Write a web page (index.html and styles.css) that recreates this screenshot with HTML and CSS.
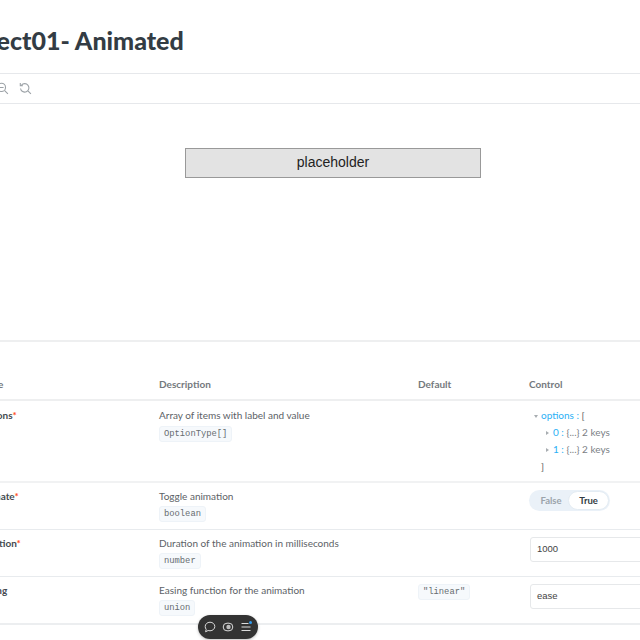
FILE: index.html
```html
<!DOCTYPE html>
<html lang="en">
<head>
    <meta charset="UTF-8">
    <title>Select01- Animated</title>
    <link rel="stylesheet" href="styles.css">
</head>
<body>
    <div class="page">
        <h1 class="title">Select01- Animated</h1>

        <div class="toolbar">
            <svg class="tool" width="13" height="13" viewBox="0 0 12 12"><circle cx="5" cy="5" r="3.800"/><path d="M3 5h4M8 8l3 3"/></svg>
            <svg class="tool" width="13" height="13" viewBox="0 0 12 12"><path d="M2.200 3A3.900 3.900 0 1 1 1.400 6M1.200 1v2.400h2.400M8 8l3 3"/></svg>
        </div>

        <div class="preview">
            <div class="placeholder">placeholder</div>
        </div>

        <div class="args">
            <div class="row head">
                <div>Name</div>
                <div>Description</div>
                <div>Default</div>
                <div>Control</div>
            </div>

            <div class="row row-options">
                <div class="name">options<span class="req">*</span></div>
                <div>
                    <div>Array of items with label and value</div>
                    <code class="type-options">OptionType[]</code>
                </div>
                <div></div>
                <div class="tree">
                    <div class="tree-line"><i class="arrow open"></i><span class="key">options :</span> <span class="bracket">[</span></div>
                    <div class="tree-line nested"><i class="arrow"></i><span class="key">0 :</span> {...} 2 keys</div>
                    <div class="tree-line nested"><i class="arrow"></i><span class="key">1 :</span> {...} 2 keys</div>
                    <div class="tree-line close"><span class="bracket">]</span></div>
                </div>
            </div>

            <div class="row">
                <div class="name">animate<span class="req">*</span></div>
                <div>
                    <div>Toggle animation</div>
                    <code>boolean</code>
                </div>
                <div></div>
                <div class="control">
                    <div class="toggle">
                        <span class="off">False</span>
                        <span class="on">True</span>
                    </div>
                </div>
            </div>

            <div class="row">
                <div class="name">duration<span class="req">*</span></div>
                <div>
                    <div>Duration of the animation in milliseconds</div>
                    <code>number</code>
                </div>
                <div></div>
                <div class="control"><div class="field">1000</div></div>
            </div>

            <div class="row row-last">
                <div class="name">easing</div>
                <div>
                    <div>Easing function for the animation</div>
                    <code>union</code>
                </div>
                <div><code class="default">"linear"</code></div>
                <div class="control"><div class="field">ease</div></div>
            </div>
        </div>
    </div>

    <div class="floating">
        <svg width="12" height="12" viewBox="0 0 12 12"><path d="M6 1.200c2.800 0 4.800 2 4.800 4.300S8.800 9.800 6 9.800c-.7 0-1.300-.1-1.900-.3L1.600 10.800l.6-2.500C1.500 7.500 1.200 6.600 1.200 5.500 1.200 3.200 3.200 1.200 6 1.200z"/></svg>
        <svg width="12" height="12" viewBox="0 0 12 12"><rect x="1.200" y="2.200" width="9.600" height="7.600" rx="3.800"/><circle class="fill" cx="6.500" cy="6" r="2.200"/></svg>
        <span class="menu">
            <svg width="12" height="12" viewBox="0 0 12 12"><path d="M1.500 2.500h7M1.500 6h9M1.500 9.500h9"/></svg>
            <i class="dot"></i>
        </span>
    </div>
</body>
</html>
```

FILE: styles.css
```css
html, body {
    margin: 0;
    height: 640px;
    overflow: hidden;
    background: #fff;
}
body {
    font-family: "Lato", "Noto Sans", sans-serif;
    font-size: 10px;
    color: #5c6266;
}
/* the screenshot is scrolled sideways, so the page starts left of the window */
.page {
    width: 780px;
    margin-left: -60px;
}
.title {
    margin: 0;
    height: 73px;
    box-sizing: border-box;
    padding: 24px 0 0 23px;
    font-size: 25px;
    line-height: 32px;
    font-weight: 900;
    color: #333c44;
}
.toolbar {
    height: 29px;
    display: flex;
    align-items: center;
    gap: 10px;
    padding-left: 56px;
    border-top: 1px solid #e6e8eb;
    border-bottom: 1px solid #e6e8eb;
}
.tool {
    fill: none;
    stroke: #9ba1a6;
    stroke-width: 1;
}
.preview {
    height: 238px;
    box-sizing: border-box;
    padding: 44px 0 0 245px;
    border-bottom: 2px solid #eeeff0;
}
.placeholder {
    width: 294px;
    height: 28px;
    border: 1px solid #999;
    background: #e3e3e3;
    color: #222;
    font-family: "Liberation Sans", Arial, sans-serif;
    font-size: 14px;
    line-height: 27px;
    text-align: center;
}
.args {
    padding-top: 26px;
}
.row {
    display: grid;
    grid-template-columns: 219px 259px 111px 1fr;
    box-sizing: border-box;
    padding-top: 7px;
    height: 47px;
    border-bottom: 1px solid #e8ebee;
}
.row > :first-child {
    padding-left: 39px;
}
.row.head > :first-child {
    padding-left: 37px;
}
.row.head {
    height: 33px;
    padding-top: 10px;
    font-weight: 700;
    color: #74797d;
    border-bottom: 2px solid #eeeff0;
}
.row-options {
    height: 82px;
    padding-top: 8px;
    border-bottom: 2px solid #f1f2f3;
}
.row-last {
    height: 48px;
    border-bottom: 2px solid #eceef0;
}
.name {
    font-weight: 700;
    color: #444a50;
}
.req {
    color: #ff4d24;
}
code {
    display: inline-block;
    margin-top: 4px;
    padding: 2px 4px;
    background: #f6f9fc;
    border: 1px solid #eef3f8;
    border-radius: 3px;
    font-family: "Liberation Mono", monospace;
    font-size: 8.800px;
    line-height: 10px;
    color: #666c70;
}
.type-options {
    margin-top: 5px;
}
.default {
    margin-top: 0;
}
.tree {
    margin-top: -1px;
    padding-left: 5px;
}
.tree-line {
    height: 17px;
    line-height: 15px;
    color: #7a8085;
    white-space: nowrap;
}
.nested {
    padding-left: 12px;
}
.close {
    padding-left: 7px;
}
.arrow {
    display: inline-block;
    width: 0;
    height: 0;
    margin: 0 4px 1px 0;
    border-left: 3px solid #a8adb1;
    border-top: 2px solid transparent;
    border-bottom: 2px solid transparent;
}
.arrow.open {
    margin-right: 3px;
    border-top: 3px solid #a8adb1;
    border-left: 2px solid transparent;
    border-right: 2px solid transparent;
    border-bottom: 0;
}
.key {
    color: #2bb0f5;
}
.bracket {
    color: #5c6266;
}
.toggle {
    display: flex;
    align-items: center;
    width: 81px;
    height: 21px;
    border-radius: 11px;
    background: #eaf1f8;
    font-weight: 700;
    font-size: 9.500px;
}
.off {
    width: 39px;
    box-sizing: border-box;
    padding-left: 5px;
    text-align: center;
    color: #9ba4ab;
}
.on {
    width: 41px;
    height: 19px;
    line-height: 17px;
    background: #fff;
    border: 1px solid #e4ecf3;
    box-sizing: border-box;
    border-radius: 10px;
    text-align: center;
    color: #333c44;
}
.field {
    width: 180px;
    height: 25px;
    box-sizing: border-box;
    margin-left: 1px;
    padding-left: 6px;
    border: 1px solid #e6e8ea;
    border-radius: 3px;
    font-family: "Liberation Sans", Arial, sans-serif;
    font-size: 9.500px;
    line-height: 21px;
    color: #444;
}
.floating {
    position: absolute;
    left: 198px;
    top: 615px;
    width: 60px;
    height: 24px;
    display: flex;
    align-items: center;
    justify-content: center;
    gap: 6px;
    border-radius: 12px;
    background: #333;
    box-shadow: 0 1px 3px rgba(0, 0, 0, .25);
}
.floating svg {
    display: block;
    fill: none;
    stroke: #dcdcdc;
    stroke-width: 1;
}
.floating .fill {
    fill: #bdbdbd;
    stroke: none;
}
.menu {
    position: relative;
    display: block;
}
.dot {
    position: absolute;
    top: 0;
    right: 0;
    width: 3px;
    height: 3px;
    border-radius: 50%;
    background: #2f9bf0;
}
```
